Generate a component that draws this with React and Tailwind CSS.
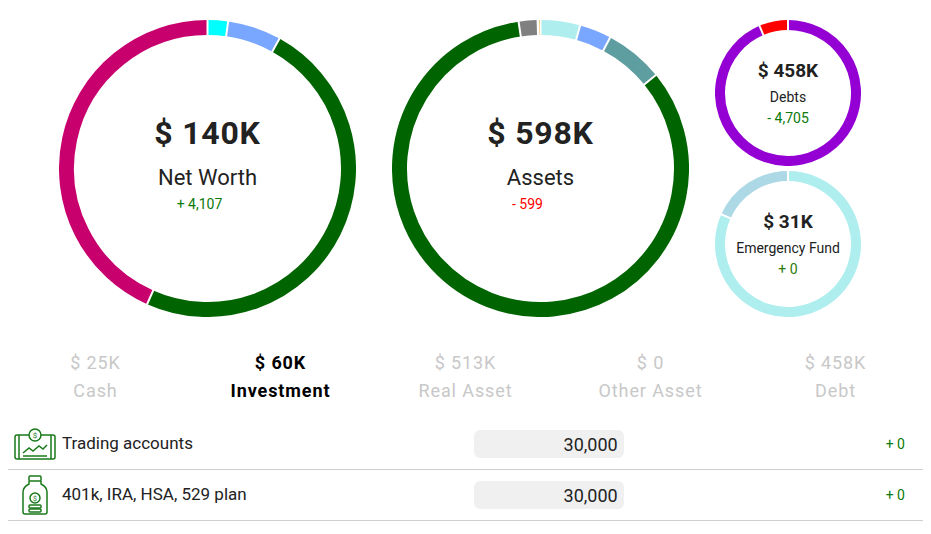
import React from "react";

function Donut({ size, width, segments, children }) {
  const r = size / 2 - width / 2;
  const c = size / 2;
  const pt = (a) => {
    const rad = ((a - 90) * Math.PI) / 180;
    return [c + r * Math.cos(rad), c + r * Math.sin(rad)];
  };
  return (
    <div className="relative shrink-0" style={{ width: size, height: size }}>
      <svg width={size} height={size} className="absolute inset-0">
        {segments.map(([from, to, color], i) => {
          const [x1, y1] = pt(from);
          const [x2, y2] = pt(to);
          const large = to - from > 180 ? 1 : 0;
          return (
            <path
              key={i}
              d={`M${x1} ${y1} A${r} ${r} 0 ${large} 1 ${x2} ${y2}`}
              fill="none"
              stroke={color}
              strokeWidth={width}
            />
          );
        })}
        {segments.map(([from], i) => {
          const rad = ((from - 90) * Math.PI) / 180;
          const a = [c + (r - width) * Math.cos(rad), c + (r - width) * Math.sin(rad)];
          const b = [c + (r + width) * Math.cos(rad), c + (r + width) * Math.sin(rad)];
          return <line key={"g" + i} x1={a[0]} y1={a[1]} x2={b[0]} y2={b[1]} stroke="white" strokeWidth="2" />;
        })}
      </svg>
      <div className="absolute inset-0 flex flex-col items-center justify-center">{children}</div>
    </div>
  );
}

function TradingIcon() {
  return (
    <svg width="44" height="34" viewBox="0 0 44 34" fill="none" stroke="#1a7a1a" strokeWidth="1.5">
      <rect x="2" y="8" width="40" height="24" rx="2" />
      <line x1="6" y1="8" x2="6" y2="32" />
      <line x1="38" y1="8" x2="38" y2="32" />
      <circle cx="22" cy="8" r="6" fill="white" />
      <text x="22" y="11" fontSize="8" textAnchor="middle" fill="#1a7a1a" stroke="none">$</text>
      <path d="M10 26 L16 21 L20 24 L26 19 L30 22 L34 18" />
      <line x1="10" y1="29" x2="34" y2="29" />
    </svg>
  );
}

function JarIcon() {
  return (
    <svg width="30" height="42" viewBox="0 0 30 42" fill="none" stroke="#1a7a1a" strokeWidth="1.5">
      <rect x="9" y="2" width="12" height="5" rx="1" />
      <path d="M9 7 L9 10 Q3 13 3 18 L3 38 Q3 40 5 40 L25 40 Q27 40 27 38 L27 18 Q27 13 21 10 L21 7" />
      <circle cx="15" cy="24" r="5" />
      <text x="15" y="27" fontSize="7" textAnchor="middle" fill="#1a7a1a" stroke="none">$</text>
      <rect x="9" y="31" width="12" height="3" rx="1" />
      <rect x="9" y="35" width="12" height="3" rx="1" />
    </svg>
  );
}

export default function App() {
  const font = { fontFamily: "Roboto, 'Liberation Sans', sans-serif" };
  const cats = [
    ["$ 25K", "Cash", false],
    ["$ 60K", "Investment", true],
    ["$ 513K", "Real Asset", false],
    ["$ 0", "Other Asset", false],
    ["$ 458K", "Debt", false],
  ];
  const rows = [
    [<TradingIcon />, "Trading accounts", "30,000"],
    [<JarIcon />, "401k, IRA, HSA, 529 plan", "30,000"],
  ];
  return (
    <div className="w-[931px] h-[534px] bg-white text-[#222]" style={font}>
      <div className="flex items-start pt-[20px] pl-[59px]">
        <Donut size={297} width={15} segments={[[0, 8, "#00ffff"], [8, 29, "#79a6fe"], [29, 204, "#006400"], [204, 360, "#c8006e"]]}>
          <div className="text-[32px] font-bold tracking-wide mt-[-14px]">$ 140K</div>
          <div className="text-[22px] mt-[4px]">Net Worth</div>
          <div className="text-[14px] text-[#0a7a0a] mr-[16px]">+ 4,107</div>
        </Donut>
        <div className="w-[36px]" />
        <Donut size={297} width={15} segments={[[-8.5, -1.5, "#808080"], [-1, 0, "#f0a020"], [0, 15.5, "#afeeee"], [15.5, 28, "#79a6fe"], [28, 51, "#5f9ea0"], [51, 351.5, "#006400"]]}>
          <div className="text-[32px] font-bold tracking-wide mt-[-14px]">$ 598K</div>
          <div className="text-[22px] mt-[4px]">Assets</div>
          <div className="text-[14px] text-[#ff0000] mr-[26px]">- 599</div>
        </Donut>
        <div className="flex flex-col gap-[5px] ml-[26px]">
          <Donut size={146} width={10} segments={[[-23, 0, "#ff0000"], [0, 337, "#9400d3"]]}>
            <div className="text-[19px] font-bold">$ 458K</div>
            <div className="text-[14px] mt-[1px]">Debts</div>
            <div className="text-[14px] text-[#0a7a0a]">- 4,705</div>
          </Donut>
          <Donut size={146} width={10} segments={[[-66, 0, "#add8e6"], [0, 294, "#afeeee"]]}>
            <div className="text-[19px] font-bold">$ 31K</div>
            <div className="text-[14px] mt-[1px]">Emergency Fund</div>
            <div className="text-[14px] text-[#2a7a0a]">+ 0</div>
          </Donut>
        </div>
      </div>
      <div className="grid grid-cols-5 px-[3px] mt-[32px]">
        {cats.map(([v, l, on]) => (
          <div key={l} className={`flex flex-col items-center text-[18px] tracking-wider leading-[28px] ${on ? "text-black font-bold" : "text-[#c8c8c8]"}`}>
            <div>{v}</div>
            <div>{l}</div>
          </div>
        ))}
      </div>
      <div className="mx-[8px] mt-[14px]">
        {rows.map(([icon, name, val]) => (
          <div key={name} className="flex items-center h-[51px] border-b border-[#cfcfcf]">
            <div className="w-[54px] flex justify-center">{icon}</div>
            <div className="text-[17px] flex-1">{name}</div>
            <div className="w-[150px] h-[28px] rounded-md bg-[#f0f0f0] text-[18px] flex items-center justify-end pr-[6px] mr-[262px]">{val}</div>
            <div className="text-[14px] text-[#0a7a0a] pr-[18px]">+ 0</div>
          </div>
        ))}
      </div>
    </div>
  );
}
